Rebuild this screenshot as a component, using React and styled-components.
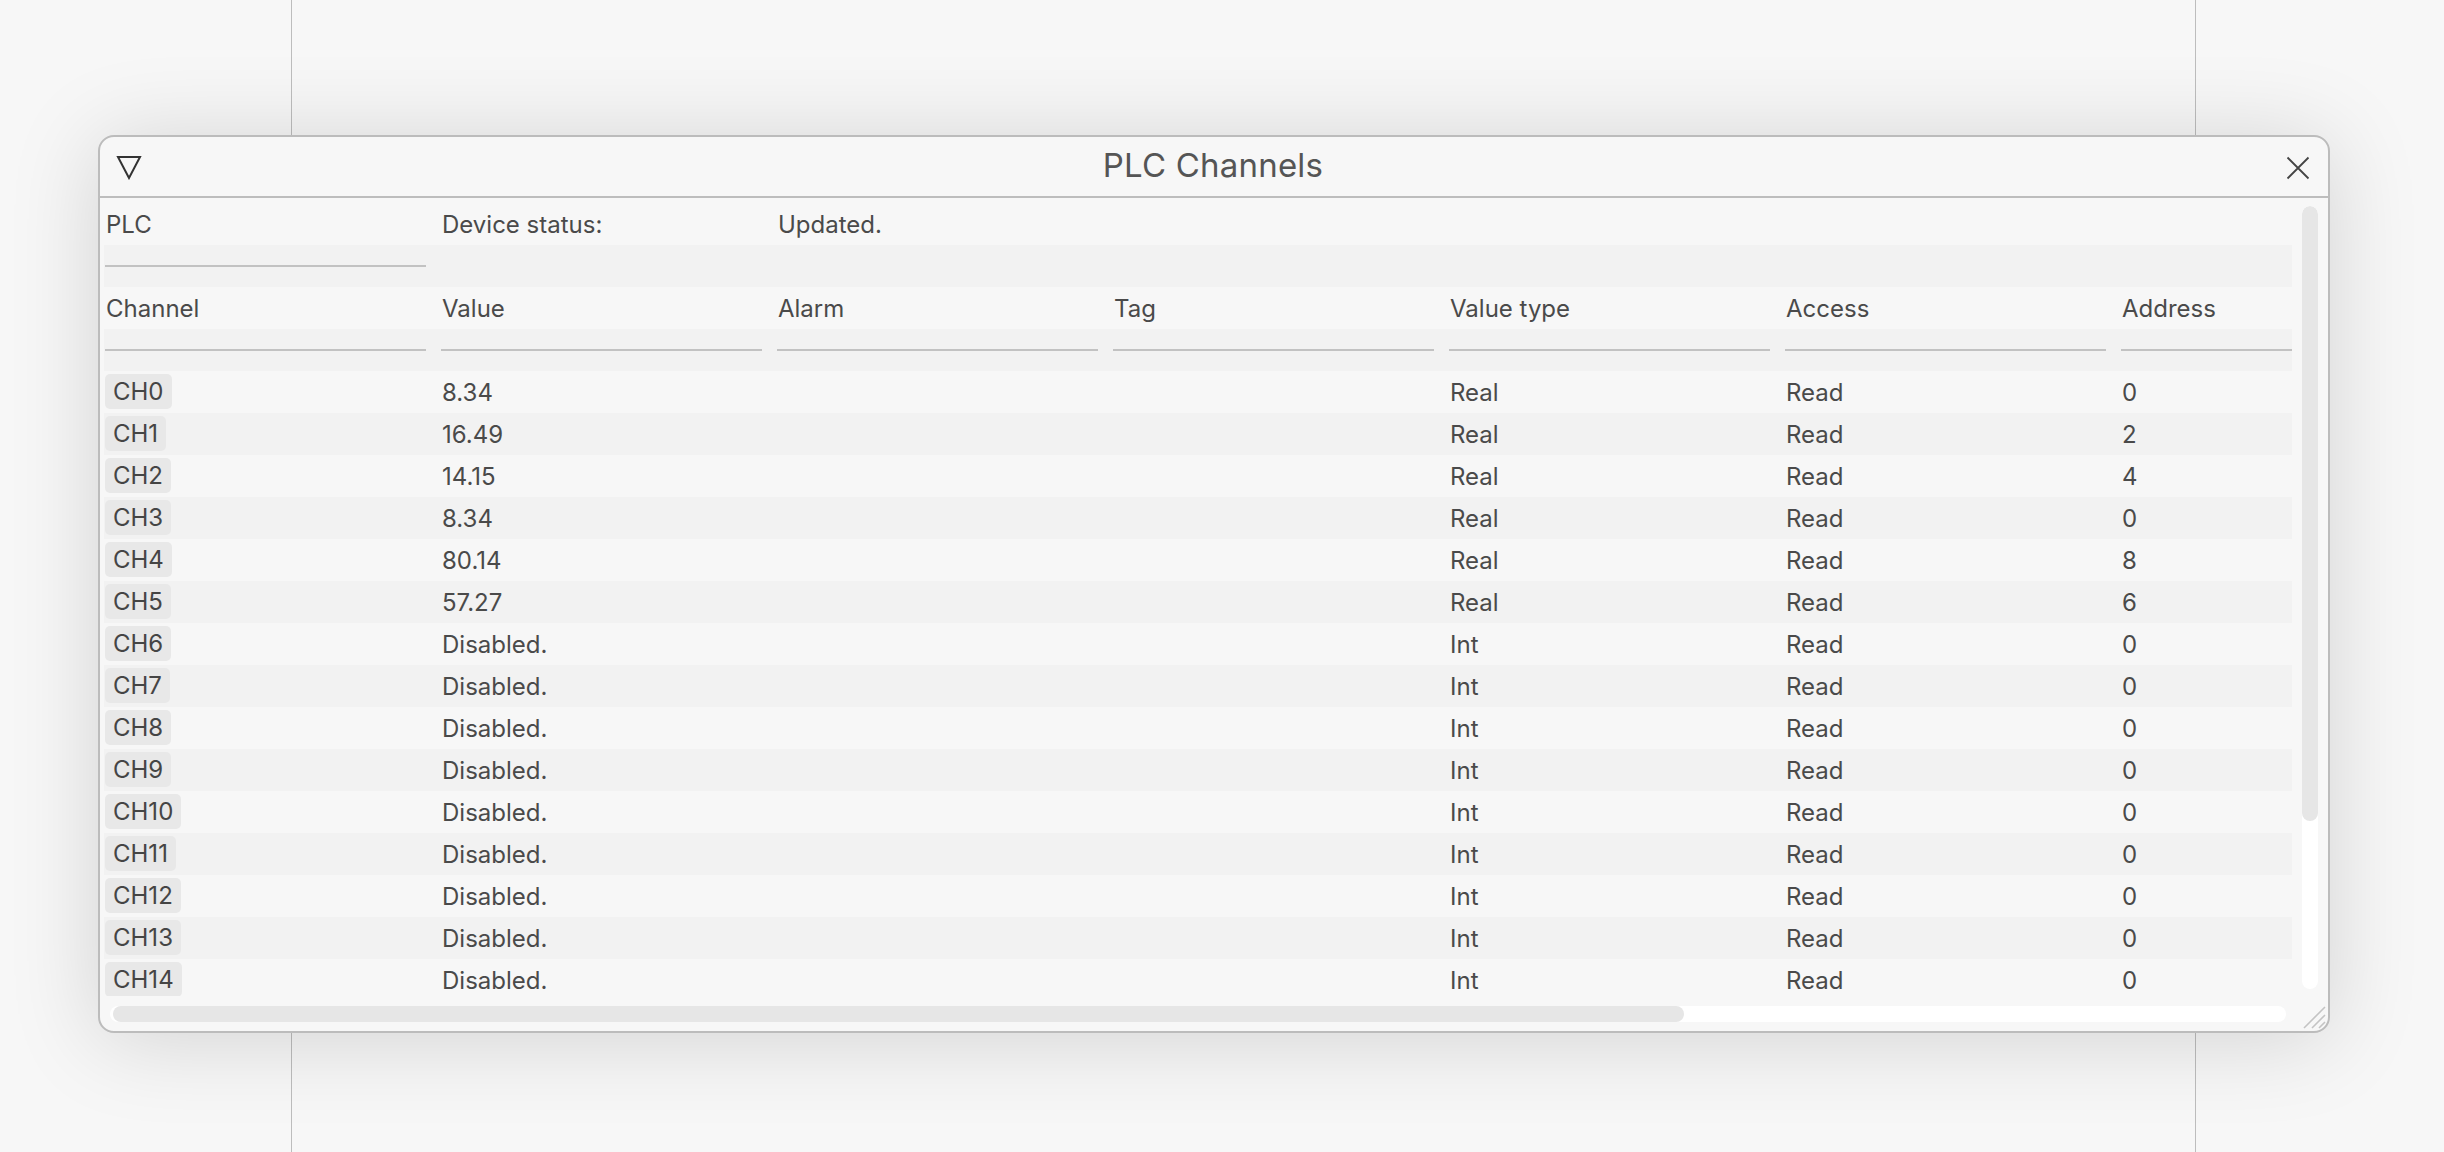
import styled, { createGlobalStyle } from "styled-components";

const GlobalStyle = createGlobalStyle`
  html, body {
    margin: 0;
    padding: 0;
    height: 100%;
    background: #f7f7f7;
    overflow: hidden;
  }
  body {
    font-family: Inter, "Liberation Sans", sans-serif;
    color: #4a4a4a;
  }
  * {
    box-sizing: border-box;
  }
`;

const COLUMNS = ["Channel", "Value", "Alarm", "Tag", "Value type", "Access", "Address"];

const channels = [
  { name: "CH0", value: "8.34", type: "Real", access: "Read", address: "0" },
  { name: "CH1", value: "16.49", type: "Real", access: "Read", address: "2" },
  { name: "CH2", value: "14.15", type: "Real", access: "Read", address: "4" },
  { name: "CH3", value: "8.34", type: "Real", access: "Read", address: "0" },
  { name: "CH4", value: "80.14", type: "Real", access: "Read", address: "8" },
  { name: "CH5", value: "57.27", type: "Real", access: "Read", address: "6" },
  ...Array.from({ length: 9 }, (_, i) => ({
    name: `CH${i + 6}`,
    value: "Disabled.",
    type: "Int",
    access: "Read",
    address: "0",
  })),
];

const TriangleIcon = () => (
  <svg width="26" height="25" viewBox="0 0 26 25">
    <polygon
      points="2,2 24,2 13,23"
      fill="none"
      stroke="#333"
      strokeWidth="2"
      strokeLinejoin="miter"
    />
  </svg>
);

const CloseIcon = () => (
  <svg width="24" height="24" viewBox="0 0 24 24">
    <path d="M1.5 1.5 L22.5 22.5 M22.5 1.5 L1.5 22.5" stroke="#444" strokeWidth="1.8" />
  </svg>
);

const GripIcon = () => (
  <svg width="26" height="26" viewBox="0 0 26 26">
    <path
      d="M3 24 L24 3 M11 24 L24 11 M18 24 L24 18"
      stroke="#c4c4c4"
      strokeWidth="1.6"
    />
  </svg>
);

const App = () => {
  return (
    <>
      <GlobalStyle />
      <Desktop>
        <PageColumn />

        <Window>
          <TitleBar>
            <IconButton $align="start" aria-label="Menu">
              <TriangleIcon />
            </IconButton>
            <Title>PLC Channels</Title>
            <IconButton $align="end" aria-label="Close">
              <CloseIcon />
            </IconButton>
          </TitleBar>

          <Body>
            <Viewport>
              <Table>
                <Row>
                  <Cell>PLC</Cell>
                  <Cell>Device status:</Cell>
                  <Cell>Updated.</Cell>
                </Row>
                <Row>
                  <Cell $top>
                    <FieldLine />
                  </Cell>
                </Row>
                <Row>
                  {COLUMNS.map((c) => (
                    <Cell key={c}>{c}</Cell>
                  ))}
                </Row>
                <Row>
                  {COLUMNS.map((c) => (
                    <Cell key={c} $top>
                      <FieldLine />
                    </Cell>
                  ))}
                </Row>
                {channels.map((ch) => (
                  <Row key={ch.name}>
                    <Cell>
                      <Chip>{ch.name}</Chip>
                    </Cell>
                    <Cell>{ch.value}</Cell>
                    <Cell />
                    <Cell />
                    <Cell>{ch.type}</Cell>
                    <Cell>{ch.access}</Cell>
                    <Cell>{ch.address}</Cell>
                  </Row>
                ))}
              </Table>
            </Viewport>

            <VScroll>
              <VThumb $size={78.6} />
            </VScroll>

            <HScroll>
              <HThumb $size={72.3} />
            </HScroll>
          </Body>

          <Grip>
            <GripIcon />
          </Grip>
        </Window>
      </Desktop>
    </>
  );
};

export default App;

const Desktop = styled.div`
  position: relative;
  width: 2444px;
  height: 1152px;
  background: #f7f7f7;
`;

const PageColumn = styled.div`
  margin-left: 291px;
  width: 1905px;
  height: 100%;
  border-left: 1px solid #bdbdbd;
  border-right: 1px solid #bdbdbd;
`;

const Window = styled.section`
  position: absolute;
  left: 98px;
  top: 135px;
  width: 2232px;
  height: 898px;
  display: flex;
  flex-direction: column;
  background: #f7f7f7;
  border: 2px solid #bcbcbc;
  border-radius: 16px;
  overflow: hidden;
  box-shadow: 0 6px 90px rgba(0, 0, 0, 0.15);
`;

const TitleBar = styled.header`
  height: 61px;
  flex: 0 0 auto;
  display: grid;
  grid-template-columns: 1fr auto 1fr;
  align-items: center;
  padding: 2px 18px 0 16px;
  border-bottom: 2px solid #bdbdbd;
`;

const Title = styled.h1`
  margin: 0 0 5px;
  font-size: 33px;
  font-weight: 400;
  color: #555;
  letter-spacing: 0.2px;
`;

const IconButton = styled.button`
  justify-self: ${(p) => p.$align};
  display: flex;
  align-items: center;
  justify-content: center;
  padding: 0;
  border: none;
  background: transparent;
  cursor: pointer;
`;

const Body = styled.div`
  flex: 1;
  min-height: 0;
  display: grid;
  grid-template-columns: 1fr 16px;
  grid-template-rows: 1fr 16px;
  column-gap: 10px;
  row-gap: 10px;
  padding: 5px 10px 9px 4px;
`;

const Viewport = styled.div`
  overflow: hidden;
  min-height: 0;
`;

const Table = styled.div`
  width: 2352px;
`;

const Row = styled.div`
  display: grid;
  grid-template-columns: repeat(7, 336px);
  height: 42px;
  background: #f7f7f7;

  &:nth-child(even) {
    background: #f2f2f2;
  }
`;

const Cell = styled.div`
  display: flex;
  align-items: ${(p) => (p.$top ? "flex-start" : "center")};
  padding: 0 13px 0 2px;
  font-size: 24px;
  color: #4a4a4a;
  white-space: nowrap;
`;

const FieldLine = styled.div`
  width: 100%;
  height: 22px;
  margin-left: -1px;
  border-bottom: 2px solid #c2c2c2;
`;

const Chip = styled.span`
  display: inline-flex;
  align-items: center;
  height: 35px;
  margin: -1px 0 0 -1px;
  padding: 0 8px 0 8px;
  border-radius: 5px;
  background: #e8e8e8;
  color: #454545;
`;

const VScroll = styled.div`
  margin: 3px 0 7px;
  border-radius: 8px;
  background: #ffffff;
  overflow: hidden;
`;

const VThumb = styled.div`
  height: ${(p) => p.$size}%;
  border-radius: 8px;
  background: #e6e6e6;
`;

const HScroll = styled.div`
  display: flex;
  align-items: stretch;
  margin: 0 6px 0 6px;
  padding-left: 3px;
  border-radius: 8px;
  background: #ffffff;
  overflow: hidden;
`;

const HThumb = styled.div`
  width: ${(p) => p.$size}%;
  border-radius: 8px;
  background: #e6e6e6;
`;

const Grip = styled.div`
  position: absolute;
  right: 1px;
  bottom: 1px;
  width: 26px;
  height: 26px;
  pointer-events: none;
`;
